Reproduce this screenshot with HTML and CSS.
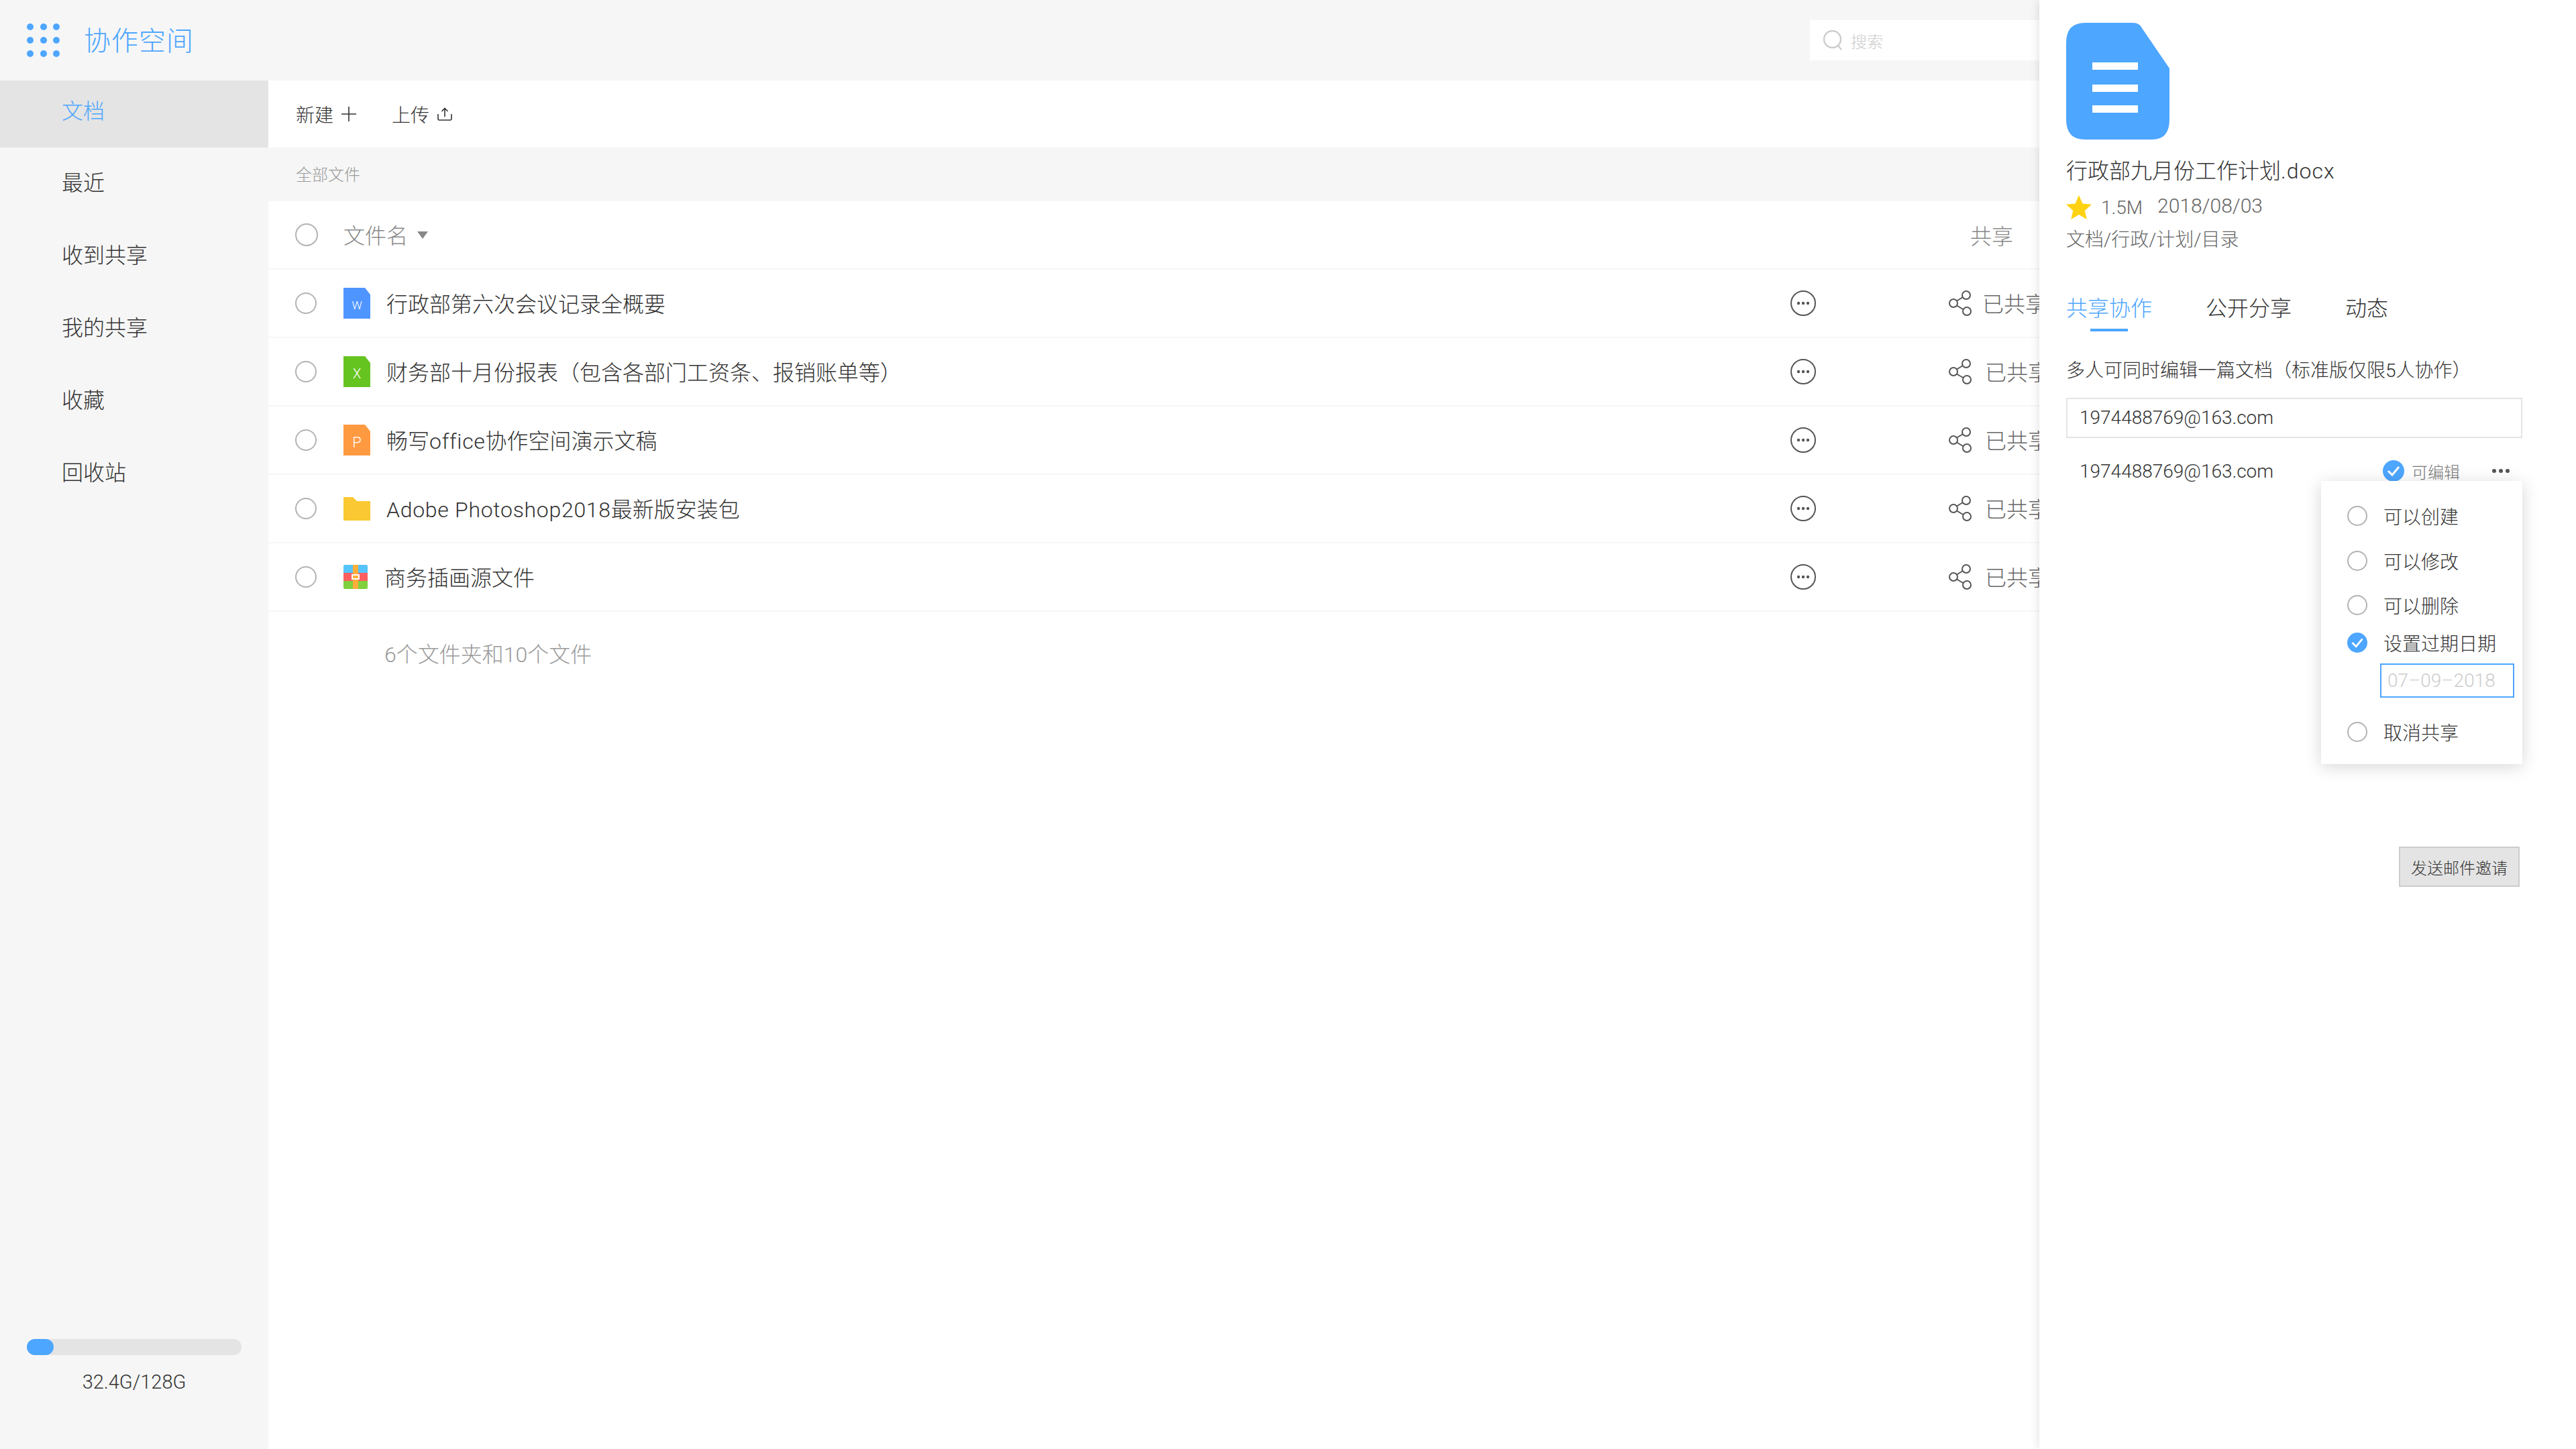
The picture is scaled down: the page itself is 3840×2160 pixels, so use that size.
FILE: index.html
```html
<!DOCTYPE html>
<html lang="zh-CN">
<head>
    <meta charset="UTF-8">
    <title>协作空间</title>
    <link rel="stylesheet" href="styles.css">
</head>
<body>
    <div class="app">
        <div class="main">
            <header class="topbar">
                <div class="grid-dots">
                    <i></i><i></i><i></i><i></i><i></i><i></i><i></i><i></i><i></i>
                </div>
                <h1 class="brand">协作空间</h1>
                <div class="search">
                    <svg class="search-icon" width="28" height="30" viewBox="0 0 28 30"><ellipse cx="13.500" cy="13.500" rx="12.500" ry="12.500" fill="none" stroke="#ccc" stroke-width="2.400"/><path d="M22 23l5 6" stroke="#ccc" stroke-width="2.400" fill="none"/></svg>
                    <span>搜索</span>
                </div>
            </header>
            <div class="body">
                <aside class="sidebar">
                    <nav class="nav">
                        <a class="nav-item active">文档</a>
                        <a class="nav-item">最近</a>
                        <a class="nav-item">收到共享</a>
                        <a class="nav-item">我的共享</a>
                        <a class="nav-item">收藏</a>
                        <a class="nav-item">回收站</a>
                    </nav>
                    <div class="storage">
                        <div class="storage-track"><div class="storage-fill"></div></div>
                        <div class="storage-text">32.4G/128G</div>
                    </div>
                </aside>
                <section class="content">
                    <div class="toolbar">
                        <span class="tool">新建
                            <svg width="22" height="22" viewBox="0 0 22 22"><path d="M11 0v22M0 11h22" stroke="#333" stroke-width="1.600"/></svg>
                        </span>
                        <span class="tool">上传
                            <svg width="22" height="20" viewBox="0 0 22 20"><path d="M11 14V2M6.500 6L11 1.500 15.500 6M1 10v7a2 2 0 0 0 2 2h16a2 2 0 0 0 2-2v-7" stroke="#333" stroke-width="1.600" fill="none"/></svg>
                        </span>
                    </div>
                    <div class="crumb">全部文件</div>
                    <div class="list-head">
                        <span class="radio big"></span>
                        <span class="col-name">文件名</span>
                        <span class="caret"></span>
                        <span class="col-share">共享</span>
                    </div>

                    <div class="row">
                        <span class="radio"></span>
                        <span class="file-icon blue">W</span>
                        <span class="file-name">行政部第六次会议记录全概要</span>
                        <svg class="more" width="38" height="38" viewBox="0 0 38 38"><circle cx="19" cy="19" r="18" fill="none" stroke="#555" stroke-width="2"/><circle cx="12" cy="19" r="2.200" fill="#555"/><circle cx="19" cy="19" r="2.200" fill="#555"/><circle cx="26" cy="19" r="2.200" fill="#555"/></svg>
                        <svg class="share" width="34" height="38" viewBox="0 0 34 38"><use href="#share-shape"/></svg>
                        <span class="shared first">已共享</span>
                    </div>
                    <div class="row">
                        <span class="radio"></span>
                        <span class="file-icon green">X</span>
                        <span class="file-name">财务部十月份报表（包含各部门工资条、报销账单等）</span>
                        <svg class="more" width="38" height="38" viewBox="0 0 38 38"><circle cx="19" cy="19" r="18" fill="none" stroke="#555" stroke-width="2"/><circle cx="12" cy="19" r="2.200" fill="#555"/><circle cx="19" cy="19" r="2.200" fill="#555"/><circle cx="26" cy="19" r="2.200" fill="#555"/></svg>
                        <svg class="share" width="34" height="38" viewBox="0 0 34 38"><use href="#share-shape"/></svg>
                        <span class="shared">已共享</span>
                    </div>
                    <div class="row">
                        <span class="radio"></span>
                        <span class="file-icon orange">P</span>
                        <span class="file-name">畅写<span class="latin">office</span>协作空间演示文稿</span>
                        <svg class="more" width="38" height="38" viewBox="0 0 38 38"><circle cx="19" cy="19" r="18" fill="none" stroke="#555" stroke-width="2"/><circle cx="12" cy="19" r="2.200" fill="#555"/><circle cx="19" cy="19" r="2.200" fill="#555"/><circle cx="26" cy="19" r="2.200" fill="#555"/></svg>
                        <svg class="share" width="34" height="38" viewBox="0 0 34 38"><use href="#share-shape"/></svg>
                        <span class="shared">已共享</span>
                    </div>
                    <div class="row">
                        <span class="radio"></span>
                        <svg class="type-icon" width="40" height="35" viewBox="0 0 40 35"><path d="M1 0h13l6 6h19a1 1 0 0 1 1 1v27a1 1 0 0 1-1 1H1a1 1 0 0 1-1-1V1a1 1 0 0 1 1-1z" fill="#fac832"/></svg>
                        <span class="file-name"><span class="latin">Adobe Photoshop2018</span>最新版安装包</span>
                        <svg class="more" width="38" height="38" viewBox="0 0 38 38"><circle cx="19" cy="19" r="18" fill="none" stroke="#555" stroke-width="2"/><circle cx="12" cy="19" r="2.200" fill="#555"/><circle cx="19" cy="19" r="2.200" fill="#555"/><circle cx="26" cy="19" r="2.200" fill="#555"/></svg>
                        <svg class="share" width="34" height="38" viewBox="0 0 34 38"><use href="#share-shape"/></svg>
                        <span class="shared">已共享</span>
                    </div>
                    <div class="row">
                        <span class="radio"></span>
                        <svg class="type-icon zip" width="36" height="36" viewBox="0 0 36 36"><path d="M2 0h32a2 2 0 0 1 2 2v10H0V2a2 2 0 0 1 2-2z" fill="#55c4fa"/><rect y="12" width="36" height="12" fill="#ff5f5f"/><path d="M0 24h36v10a2 2 0 0 1-2 2H2a2 2 0 0 1-2-2z" fill="#80d13d"/><rect x="14" width="8" height="36" fill="#ffae3b"/><rect x="13" y="15" width="10" height="6" fill="#ffae3b" stroke="#fff" stroke-width="2"/></svg>
                        <span class="file-name tight">商务插画源文件</span>
                        <svg class="more" width="38" height="38" viewBox="0 0 38 38"><circle cx="19" cy="19" r="18" fill="none" stroke="#555" stroke-width="2"/><circle cx="12" cy="19" r="2.200" fill="#555"/><circle cx="19" cy="19" r="2.200" fill="#555"/><circle cx="26" cy="19" r="2.200" fill="#555"/></svg>
                        <svg class="share" width="34" height="38" viewBox="0 0 34 38"><use href="#share-shape"/></svg>
                        <span class="shared">已共享</span>
                    </div>
                    <p class="summary">6个文件夹和10个文件</p>
                </section>
            </div>
        </div>

        <aside class="panel">
            <svg class="doc-icon" width="154" height="174" viewBox="0 0 154 174">
                <path d="M28 0H100Q109 0 113 8L154 68V144Q154 174 128 174H28Q0 174 0 144V30Q0 0 28 0z" fill="#4da6ff"/>
                <rect x="39" y="59" width="68" height="11" fill="#fff"/>
                <rect x="39" y="92" width="68" height="11" fill="#fff"/>
                <rect x="39" y="123" width="68" height="11" fill="#fff"/>
            </svg>
            <div class="doc-title">行政部九月份工作计划<span class="latin wide">.docx</span></div>
            <div class="doc-meta">
                <svg width="38" height="36" viewBox="0 0 38 36"><path d="M19 0l5.500 12.500 13.500 1.300-10.200 9.200 3 13-11.800-7-11.800 7 3-13L0 13.800l13.500-1.300z" fill="#ffd211"/></svg>
                <span class="doc-size">1.5M</span>
                <span class="doc-date">2018/08/03</span>
            </div>
            <div class="doc-path">文档/行政/计划/目录</div>
            <div class="tabs">
                <span class="tab active">共享协作</span>
                <span class="tab">公开分享</span>
                <span class="tab">动态</span>
            </div>
            <div class="hint">多人可同时编辑一篇文档（标准版仅限5人协作）</div>
            <div class="email-box">1974488769@163.com</div>
            <div class="member">
                <span class="member-mail">1974488769@163.com</span>
                <svg class="check" width="32" height="32" viewBox="0 0 32 32"><use href="#check-shape"/></svg>
                <span class="member-role">可编辑</span>
                <span class="dots"><i></i><i></i><i></i></span>
                <div class="popup">
                    <div class="perm"><span class="radio small"></span>可以创建</div>
                    <div class="perm"><span class="radio small"></span>可以修改</div>
                    <div class="perm before-date"><span class="radio small"></span>可以删除</div>
                    <div class="perm near">
                        <svg class="check" width="30" height="30" viewBox="0 0 32 32"><use href="#check-shape"/></svg>设置过期日期
                    </div>
                    <div class="date-box">07–09–2018</div>
                    <div class="perm last"><span class="radio small"></span>取消共享</div>
                </div>
            </div>
            <button class="invite">发送邮件邀请</button>
        </aside>
    </div>

    <!-- shared icon shapes -->
    <svg class="defs" width="0" height="0">
        <defs>
            <g id="share-shape" fill="none" stroke="#555" stroke-width="2">
                <circle cx="7" cy="19" r="6"/>
                <circle cx="26" cy="7" r="6"/>
                <circle cx="27" cy="31" r="6"/>
                <path d="M12 15.500L21 10M12 22.500l10 6"/>
            </g>
            <g id="check-shape">
                <circle cx="16" cy="16" r="16" fill="#4da6ff"/>
                <path d="M8 16l6 6 10-12" fill="none" stroke="#fff" stroke-width="3"/>
            </g>
        </defs>
    </svg>
</body>
</html>
```

FILE: styles.css
```css
* {
    box-sizing: border-box;
}

body {
    margin: 0;
    background: #fff;
    color: #333;
    font-family: Roboto, "Noto Sans CJK SC", sans-serif;
    font-weight: 300;
}

.latin {
    letter-spacing: 0.7px;
}

.latin.wide {
    letter-spacing: 1px;
}

.app {
    display: flex;
    width: 3840px;
    height: 2160px;
    overflow: hidden;
}

.main {
    width: 3040px;
    display: flex;
    flex-direction: column;
    overflow: hidden;
}

/* top bar */
.topbar {
    height: 120px;
    flex: none;
    background: #f6f6f6;
    display: flex;
    align-items: center;
    padding-left: 40px;
}

.grid-dots {
    display: grid;
    grid-template-columns: repeat(3, 10px);
    grid-auto-rows: 10px;
    gap: 10px 9.500px;
}

.grid-dots i {
    background: #4da6ff;
    border-radius: 50%;
}

.brand {
    margin: 0 0 4px 36px;
    font-size: 40px;
    font-weight: 300;
    letter-spacing: 1px;
    color: #4da6ff;
}

.search {
    margin-left: auto;
    width: 342px;
    height: 60px;
    background: #fff;
    display: flex;
    align-items: center;
    padding-left: 20px;
    gap: 13px;
    font-size: 24px;
    color: #ccc;
}

/* sidebar */
.body {
    flex: 1;
    display: flex;
    min-height: 0;
}

.sidebar {
    width: 400px;
    flex: none;
    background: #f6f6f6;
    display: flex;
    flex-direction: column;
}

.nav {
    display: flex;
    flex-direction: column;
}

.nav-item {
    height: 108px;
    display: flex;
    align-items: center;
    padding-left: 92px;
    padding-bottom: 4px;
    font-size: 32px;
}

.nav-item.active {
    height: 100px;
    color: #4da6ff;
    background: #e4e4e4;
    padding-bottom: 14px;
    margin-bottom: -2px;
}

.storage {
    margin-top: auto;
    padding: 0 40px 80px;
}

.storage-track {
    height: 24px;
    background: #e4e4e4;
    border-radius: 12px;
}

.storage-fill {
    width: 40px;
    height: 24px;
    background: #4da6ff;
    border-radius: 12px;
}

.storage-text {
    margin-top: 20px;
    text-align: center;
    font-size: 29px;
    line-height: 40px;
}

/* file list */
.content {
    flex: 1;
    min-width: 0;
}

.toolbar {
    height: 100px;
    display: flex;
    align-items: center;
    padding-left: 441px;
    margin-left: -400px;
    gap: 53px;
}

.tool {
    display: flex;
    align-items: center;
    gap: 12px;
    font-size: 28px;
}

.crumb {
    height: 80px;
    background: #f6f6f6;
    display: flex;
    align-items: center;
    padding-left: 41px;
    padding-bottom: 3px;
    font-size: 24px;
    color: #999;
}

.list-head,
.row {
    height: 102px;
    display: flex;
    align-items: center;
    padding-left: 40px;
    border-bottom: 2px solid #f6f6f6;
    font-size: 32px;
}

.radio {
    flex: none;
    width: 32px;
    height: 32px;
    border: 2px solid #b3b3b3;
    border-radius: 50%;
    background: #fff;
}

.radio.big {
    width: 34px;
    height: 34px;
}

.radio.small {
    width: 30px;
    height: 30px;
}

.list-head {
    color: #888;
}

.col-name {
    margin-left: 38px;
    margin-bottom: 2px;
}

.caret {
    margin-left: 14px;
    border: solid transparent;
    border-width: 11px 8px 0;
    border-top-color: #888;
}

.col-share {
    margin-left: auto;
    margin-right: 39px;
}

.file-icon {
    flex: none;
    width: 40px;
    height: 46px;
    margin-left: 40px;
    display: flex;
    align-items: center;
    justify-content: center;
    padding-top: 6px;
    color: #fff;
    font-size: 20px;
    clip-path: polygon(0 0, 32px 0, 40px 10px, 40px 46px, 0 46px);
}

.file-icon.blue {
    background: #4f95ff;
    font-size: 17px;
}

.file-icon.green {
    background: #66c421;
}

.file-icon.orange {
    background: #ff9a41;
    font-size: 22px;
}

.type-icon {
    flex: none;
    margin-left: 40px;
}

.file-name {
    margin-left: 24px;
    margin-bottom: 2px;
}

.file-name.tight {
    margin-left: 25px;
}

.more {
    margin-left: auto;
    flex: none;
}

.share {
    margin-left: 198px;
    flex: none;
}

.shared {
    margin-left: 20px;
    margin-bottom: 2px;
    flex: none;
    width: 81px;
    white-space: nowrap;
    color: #666;
}

.shared.first {
    margin-left: 16px;
    width: 85px;
}

.summary {
    margin: 42px 0 0 173px;
    font-size: 32px;
    line-height: 44px;
    color: #999;
}

/* detail panel */
.panel {
    width: 800px;
    flex: none;
    position: relative;
    background: #fff;
    box-shadow: 0 0 14px rgba(0, 0, 0, 0.14);
    padding: 34px 80px 0 40px;
    display: flex;
    flex-direction: column;
}

.doc-icon {
    display: block;
    flex: none;
}

.doc-title {
    margin-top: 26px;
    font-size: 32px;
    line-height: 42px;
}

.doc-meta {
    display: flex;
    align-items: center;
    margin-top: 10px;
    height: 46px;
}

.doc-size {
    margin-left: 14px;
    font-size: 28px;
    color: #666;
}

.doc-date {
    margin-left: 22px;
    margin-top: -5px;
    font-size: 30px;
    color: #666;
}

.doc-path {
    margin-top: 6px;
    font-size: 28px;
    line-height: 40px;
    color: #666;
}

.tabs {
    display: flex;
    gap: 80px;
    margin-top: 60px;
}

.tab {
    position: relative;
    font-size: 32px;
    line-height: 44px;
}

.tab.active {
    color: #4da6ff;
}

.tab.active::after {
    content: "";
    position: absolute;
    left: 36px;
    top: 52px;
    width: 56px;
    height: 4px;
    background: #4da6ff;
}

.hint {
    margin-top: 51px;
    font-size: 28px;
    line-height: 40px;
}

.email-box {
    margin-top: 20px;
    height: 60px;
    border: 2px solid #e4e4e4;
    padding-left: 18px;
    font-size: 28px;
    line-height: 56px;
}

.member {
    position: relative;
    display: flex;
    align-items: center;
    height: 60px;
    margin-top: 19px;
    padding: 0 19px 0 20px;
    font-size: 28px;
}

.member-mail {
    margin-right: auto;
}

.member-role {
    margin-left: 11px;
    font-size: 24px;
    color: #777;
}

.dots {
    display: flex;
    gap: 4px;
    margin-left: 48px;
}

.dots i {
    width: 6px;
    height: 6px;
    background: #555;
    border-radius: 50%;
}

.popup {
    position: absolute;
    right: 0;
    top: 45px;
    width: 300px;
    height: 422px;
    background: #fff;
    box-shadow: 0 4px 24px rgba(0, 0, 0, 0.16);
    padding: 32px 0 0 39px;
}

.perm {
    display: flex;
    align-items: center;
    gap: 24px;
    height: 40px;
    margin-bottom: 26.500px;
    font-size: 28px;
}

.perm.before-date {
    margin-bottom: 16px;
}

.perm.near {
    margin-bottom: 11px;
}

.perm.last {
    margin: 31px 0 0;
}

.date-box {
    width: 200px;
    height: 51px;
    margin-left: 49px;
    border: 2px solid #4da6ff;
    padding-left: 9px;
    font-size: 28px;
    line-height: 47px;
    color: #ccc;
}

.invite {
    align-self: flex-end;
    margin: 530px 4px 0 0;
    width: 180px;
    height: 60px;
    padding: 0;
    border: 2px solid #ccc;
    background: #e4e4e4;
    font: inherit;
    font-size: 24px;
    color: #333;
}

.defs {
    position: absolute;
}
```
